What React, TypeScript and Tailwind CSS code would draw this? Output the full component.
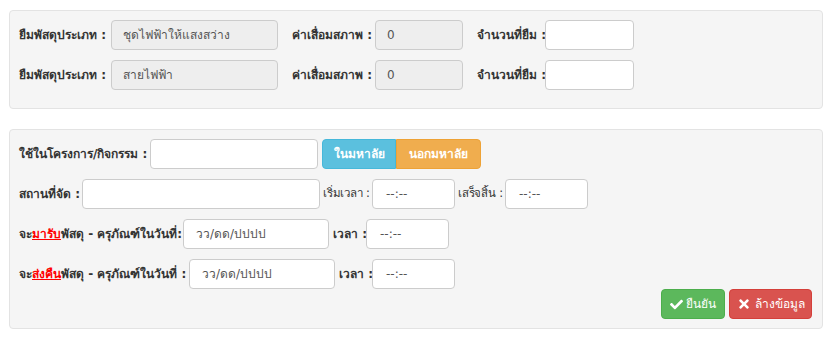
import { FaCheck, FaTimes } from "react-icons/fa";

const inputCls =
  "h-[30px] shrink-0 rounded-[4px] border border-[#ccc] bg-white px-[11px] text-[12px] text-[#555] flex items-center";
const disabledCls =
  "h-[30px] shrink-0 rounded-[4px] border border-[#ccc] bg-[#eee] px-[11px] text-[12px] text-[#555] flex items-center";

function Field({ w, value, disabled }: { w: string; value?: string; disabled?: boolean }) {
  return <div className={`${disabled ? disabledCls : inputCls} ${w}`}>{value}</div>;
}

export default function App() {
  const font = { fontFamily: "Tahoma, 'DejaVu Sans', 'Liberation Sans', sans-serif" };
  return (
    <div className="min-h-screen bg-white px-[9px] pt-[10px] text-[12px] text-[#333]" style={font}>
      <div className="w-[814px] rounded-[4px] border border-[#e3e3e3] bg-[#f5f5f5] pl-[9px] pr-[10px] pt-[9px] pb-[18px]">
        {["ชุดไฟฟ้าให้แสงสว่าง", "สายไฟฟ้า"].map((t, i) => (
          <div key={i} className={`flex items-center whitespace-nowrap ${i === 0 ? "mb-[10px]" : ""}`}>
            <span className="w-[92px] shrink-0 font-bold">ยืมพัสดุประเภท :</span>
            <Field w="w-[167px]" value={t} disabled />
            <span className="ml-[14px] w-[83px] shrink-0 font-bold">ค่าเสื่อมสภาพ :</span>
            <Field w="w-[88px]" value="0" disabled />
            <span className="ml-[14px] w-[68px] shrink-0 font-bold">จำนวนที่ยืม :</span>
            <Field w="w-[89px]" />
          </div>
        ))}
      </div>

      <div className="mt-[20px] w-[814px] rounded-[4px] border border-[#e3e3e3] bg-[#f5f5f5] pl-[9px] pr-[9px] pt-[9px] pb-[9px] whitespace-nowrap">
        <div className="flex items-center">
          <span className="w-[131px] shrink-0 font-semibold">ใช้ในโครงการ/กิจกรรม :</span>
          <Field w="w-[168px]" />
          <div className="ml-[4px] flex">
            <button className="h-[30px] w-[74px] rounded-l-[4px] border border-[#46b8da] bg-[#5bc0de] font-bold text-white">
              ในมหาลัย
            </button>
            <button className="h-[30px] w-[85px] rounded-r-[4px] border border-[#eea236] bg-[#f0ad4e] font-bold text-white">
              นอกมหาลัย
            </button>
          </div>
        </div>

        <div className="mt-[10px] flex items-center">
          <span className="w-[63px] shrink-0 font-semibold">สถานที่จัด :</span>
          <Field w="w-[238px]" />
          <span className="ml-[3px] w-[49px] shrink-0 text-[11.5px] tracking-[-0.2px]">เริ่มเวลา :</span>
          <Field w="w-[83px] pl-[13px]" value="--:--" />
          <span className="ml-[3px] w-[47px] shrink-0 text-[11.5px] tracking-[-0.2px]">เสร็จสิ้น :</span>
          <Field w="w-[83px] pl-[13px]" value="--:--" />
        </div>

        <div className="mt-[10px] flex items-center">
          <span className="w-[164px] shrink-0 font-bold">
            จะ<span className="text-[#f00] underline">มารับ</span>พัสดุ - ครุภัณฑ์ในวันที่:
          </span>
          <Field w="w-[146px] pl-[12px]" value="วว/ดด/ปปปป" />
          <span className="ml-[4px] w-[33px] shrink-0 font-bold">เวลา :</span>
          <Field w="w-[83px] pl-[13px]" value="--:--" />
        </div>

        <div className="mt-[10px] flex items-center">
          <span className="w-[170px] shrink-0 font-bold">
            จะ<span className="text-[#f00] underline">ส่งคืน</span>พัสดุ - ครุภัณฑ์ในวันที่ :
          </span>
          <Field w="w-[146px] pl-[12px]" value="วว/ดด/ปปปป" />
          <span className="ml-[4px] w-[33px] shrink-0 font-bold">เวลา :</span>
          <Field w="w-[83px] pl-[13px]" value="--:--" />
        </div>

        <div className="flex justify-end gap-[4px] pr-[1px]">
          <button className="flex h-[30px] w-[64px] items-center justify-center gap-[3px] rounded-[4px] border border-[#4cae4c] bg-[#5cb85c] text-white">
            <FaCheck size={13} />
            ยืนยัน
          </button>
          <button className="flex h-[30px] w-[83px] items-center justify-center gap-[4px] rounded-[4px] border border-[#d43f3a] bg-[#d9534f] text-white">
            <FaTimes size={14} />
            ล้างข้อมูล
          </button>
        </div>
      </div>
    </div>
  );
}
